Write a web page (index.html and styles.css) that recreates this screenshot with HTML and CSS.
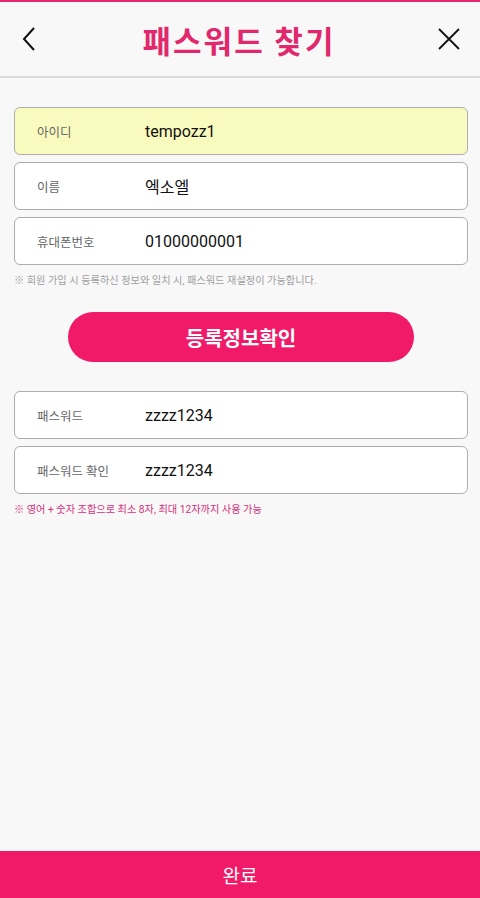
FILE: index.html
```html
<!DOCTYPE html>
<html lang="ko">
<head>
    <meta charset="UTF-8">
    <meta name="viewport" content="width=device-width, initial-scale=1.0">
    <title>패스워드 찾기</title>
    <link rel="stylesheet" href="styles.css">
</head>
<body>
    <div class="page">
        <header class="top-bar">
            <button class="icon-btn" type="button" aria-label="뒤로">
                <svg width="14" height="24" viewBox="0 0 14 24"><path d="M12 1 L2 12 L12 23" fill="none" stroke="#111" stroke-width="2"/></svg>
            </button>
            <h1>패스워드 찾기</h1>
            <button class="icon-btn" type="button" aria-label="닫기">
                <svg width="22" height="22" viewBox="0 0 22 22"><path d="M1 1 L21 21 M21 1 L1 21" fill="none" stroke="#111" stroke-width="1.8"/></svg>
            </button>
        </header>

        <form class="find-form">
            <div class="field highlight">
                <label>아이디</label>
                <span class="value">tempozz1</span>
            </div>
            <div class="field">
                <label>이름</label>
                <span class="value">엑소엘</span>
            </div>
            <div class="field">
                <label>휴대폰번호</label>
                <span class="value">01000000001</span>
            </div>
            <p class="note">※ 회원 가입 시 등록하신 정보와 일치 시, 패스워드 재설정이 가능합니다.</p>

            <button class="check-btn" type="button">등록정보확인</button>

            <div class="field">
                <label>패스워드</label>
                <span class="value">zzzz1234</span>
            </div>
            <div class="field">
                <label>패스워드 확인</label>
                <span class="value">zzzz1234</span>
            </div>
            <p class="note pink">※ 영어 + 숫자 조합으로 최소 8자, 최대 12자까지 사용 가능</p>
        </form>

        <button class="done-btn" type="button">완료</button>
    </div>
</body>
</html>
```

FILE: styles.css
```css
* {
    box-sizing: border-box;
}
body {
    margin: 0;
    font-family: Roboto, "Noto Sans CJK KR", sans-serif;
    background-color: #f8f8f8;
    color: #111;
}
.page {
    min-height: 898px;
    display: flex;
    flex-direction: column;
}
.top-bar {
    height: 78px;
    border-top: 2px solid #e8286c;
    border-bottom: 2px solid #dcdcdc;
    display: flex;
    align-items: center;
    justify-content: space-between;
    padding: 0 20px 0 22px;
}
.top-bar h1 {
    margin: 0 4px 0 0;
    font-size: 31px;
    font-weight: bold;
    color: #e2286c;
    letter-spacing: 2px;
}
.icon-btn {
    background: none;
    border: none;
    padding: 0;
    width: 22px;
    display: flex;
    align-items: center;
    justify-content: flex-start;
    cursor: pointer;
}
.find-form {
    padding: 29px 12px 0 14px;
}
.field {
    display: flex;
    align-items: center;
    height: 48px;
    margin-bottom: 7px;
    padding-left: 22px;
    background-color: #fff;
    border: 1.5px solid #aeaeae;
    border-radius: 6px;
}
.field.highlight {
    background-color: #f9fbbe;
}
.field label {
    width: 108px;
    font-size: 12.5px;
    color: #666;
}
.field .value {
    font-size: 16px;
    color: #111;
}
.note {
    margin: 0;
    font-size: 10.2px;
    color: #a0a0a0;
}
.note.pink {
    color: #d6307a;
}
.check-btn {
    display: block;
    width: 346px;
    height: 50px;
    margin: 25px auto 29px;
    border: none;
    border-radius: 25px;
    background-color: #f01a68;
    color: #fff;
    font-family: inherit;
    font-size: 20px;
    font-weight: bold;
    cursor: pointer;
}
.done-btn {
    margin-top: auto;
    height: 47px;
    border: none;
    background-color: #f01a68;
    color: #fff;
    font-family: inherit;
    font-size: 19px;
    cursor: pointer;
}
```
